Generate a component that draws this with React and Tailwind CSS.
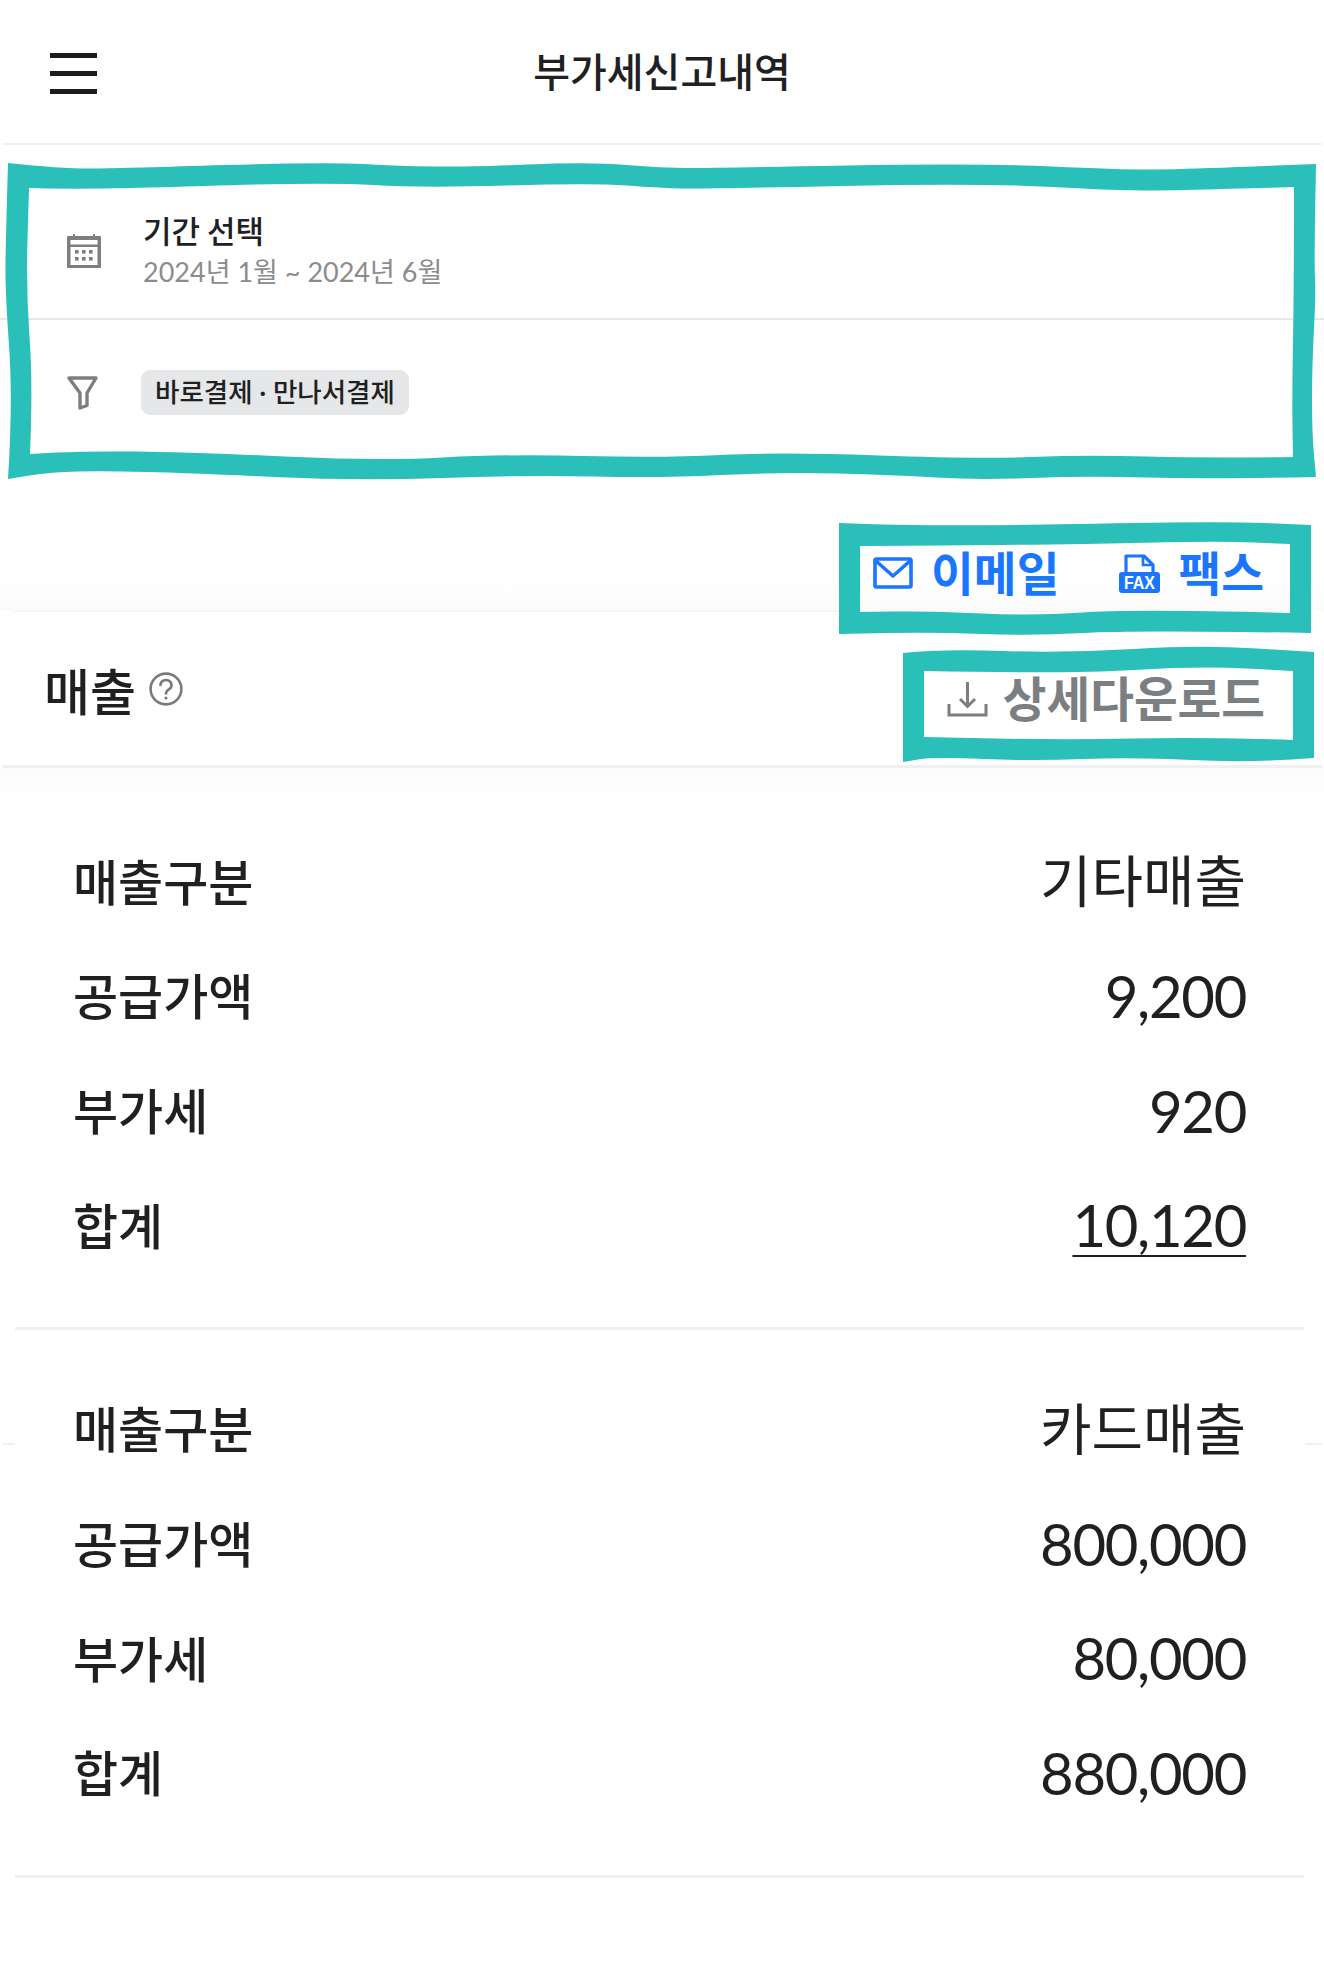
const rows = [
  [
    ['매출구분', '기타매출'],
    ['공급가액', '9,200'],
    ['부가세', '920'],
    ['합계', '10,120', true],
  ],
  [
    ['매출구분', '카드매출'],
    ['공급가액', '800,000'],
    ['부가세', '80,000'],
    ['합계', '880,000'],
  ],
];

// corners stay sharp, the points between them get smoothed
function wavy(edges) {
  let d = '';
  edges.forEach((pts, e) => {
    d += `${e === 0 ? 'M' : 'L'}${pts[0][0]} ${pts[0][1]} `;
    for (let i = 1; i < pts.length - 1; i++) {
      const mx = (pts[i][0] + pts[i + 1][0]) / 2;
      const my = (pts[i][1] + pts[i + 1][1]) / 2;
      d += `Q${pts[i][0]} ${pts[i][1]} ${mx} ${my} `;
    }
    const last = pts[pts.length - 1];
    d += `L${last[0]} ${last[1]} `;
  });
  return d + 'Z ';
}

const box1 =
  wavy([
    [[8, 163], [63, 169], [127, 168], [325, 162], [401, 166], [464, 167], [591, 162], [662, 168], [717, 168], [978, 163], [1126, 170], [1189, 169], [1316, 164]],
    [[1316, 164], [1314, 267], [1316, 290], [1312, 367], [1312, 433], [1316, 477]],
    [[1316, 477], [1210, 479], [1084, 476], [978, 480], [894, 475], [780, 472], [662, 478], [527, 475], [359, 481], [190, 473], [105, 471], [51, 472], [8, 479]],
    [[8, 479], [13, 400], [5, 290], [6, 233], [8, 163]],
  ]) +
  wavy([
    [[29, 188], [84, 190], [325, 182], [422, 188], [591, 183], [662, 188], [704, 189], [978, 183], [1126, 191], [1189, 190], [1294, 187]],
    [[1294, 187], [1294, 283], [1292, 400], [1293, 457]],
    [[1293, 457], [1210, 458], [1084, 455], [978, 459], [780, 452], [662, 458], [506, 454], [380, 461], [190, 452], [84, 451], [30, 454]],
    [[30, 454], [33, 383], [26, 290], [29, 188]],
  ]);

const box2 =
  wavy([
    [[839, 523], [933, 527], [1217, 521], [1311, 525]],
    [[1311, 525], [1311, 633]],
    [[1311, 633], [1133, 630], [1033, 636], [933, 632], [839, 634]],
    [[839, 634], [839, 523]],
  ]) +
  wavy([
    [[860, 546], [1050, 545], [1217, 541], [1290, 544]],
    [[1290, 544], [1290, 613]],
    [[1290, 613], [1133, 609], [1033, 616], [933, 611], [860, 612]],
    [[860, 612], [860, 546]],
  ]);

const box3 =
  wavy([
    [[903, 653], [940, 649], [1067, 653], [1200, 645], [1314, 652]],
    [[1314, 652], [1314, 758]],
    [[1314, 758], [1250, 763], [1133, 757], [1033, 761], [933, 757], [903, 762]],
    [[903, 762], [903, 653]],
  ]) +
  wavy([
    [[924, 671], [1067, 674], [1200, 666], [1293, 671]],
    [[1293, 671], [1293, 740]],
    [[1293, 740], [1200, 737], [1067, 740], [924, 737]],
    [[924, 737], [924, 671]],
  ]);

function CalendarIcon() {
  return (
    <svg width="34" height="36" viewBox="0 0 34 36" className="shrink-0" fill="#7c7f82">
      <path fillRule="evenodd" d="M1 3h5V1h2v2h18V1h2v2h5a1 1 0 0 1 1 1v30a1 1 0 0 1-1 1H1a1 1 0 0 1-1-1V4a1 1 0 0 1 1-1zm2.5 4v4.5h27V7zm0 7v18h27V14z" />
      {[8, 15, 22].map((x) => (
        <g key={x}>
          <rect x={x} y="17" width="3.6" height="3.6" />
          <rect x={x} y="24" width="3.6" height="3.6" />
        </g>
      ))}
    </svg>
  );
}

function FilterIcon() {
  return (
    <svg width="32" height="34" viewBox="0 0 32 34" className="shrink-0" fill="none" stroke="#7c7f82" strokeWidth="3.4" strokeLinejoin="round">
      <path d="M2 2h27L20 17v12.5L13 32V17z" />
    </svg>
  );
}

function MailIcon() {
  return (
    <svg width="40" height="32" viewBox="0 0 40 32" fill="none" stroke="#1a76ff" strokeWidth="3.6" strokeLinejoin="round">
      <rect x="2" y="2" width="36" height="28" rx="1.5" />
      <path d="M3 4l17 15L37 4" />
    </svg>
  );
}

function FaxIcon() {
  return (
    <svg width="41" height="40" viewBox="0 0 41 40">
      <path d="M7 21V3h18l9 9v9" fill="none" stroke="#1a76ff" strokeWidth="3.2" strokeLinejoin="round" />
      <path d="M24 3v9h10" fill="none" stroke="#1a76ff" strokeWidth="2.6" />
      <rect x="0" y="19" width="41" height="21" rx="3" fill="#1a76ff" />
      <text x="20.5" y="36" textAnchor="middle" fontSize="18" fontWeight="700" fill="#fff" fontFamily="Liberation Sans, sans-serif" textLength="31" lengthAdjust="spacingAndGlyphs">FAX</text>
    </svg>
  );
}

function DownloadIcon() {
  return (
    <svg width="41" height="36" viewBox="0 0 41 36" className="mt-[4px]" fill="none" stroke="#7b7f82" strokeWidth="3">
      <path d="M2 23v11h37V23" />
      <path d="M20.5 1v24M13 18l7.5 7.5L28 18" />
    </svg>
  );
}

function HelpIcon() {
  return (
    <svg width="34" height="34" viewBox="0 0 34 34" fill="none" stroke="#7a7a7a" strokeWidth="2.6" strokeLinecap="round">
      <circle cx="17" cy="17" r="15.4" />
      <path d="M11.5 13a5.5 5 0 1 1 8.4 4.3c-2 1.2-2.9 2-2.9 4.2" />
      <circle cx="17" cy="26" r="1.6" fill="#7a7a7a" stroke="none" />
    </svg>
  );
}

export default function App() {
  return (
    <div className="relative w-[1324px] h-[1980px] overflow-hidden bg-white text-[#1f2022] font-['Lato','Noto_Sans_CJK_KR',sans-serif]">
      <header className="relative mx-[2px] h-[145px] pb-[3px] flex items-center justify-center border-b-2 border-[#f1f1f1]">
        <button className="absolute left-[48px] top-[53px] w-[47px] flex flex-col gap-[13px]">
          <span className="block h-[5px] bg-[#1c1c1c]" />
          <span className="block h-[5px] bg-[#1c1c1c]" />
          <span className="block h-[5px] bg-[#1c1c1c]" />
        </button>
        <h1 className="text-[40px] leading-none font-medium font-['Noto_Sans_CJK_KR',sans-serif]">부가세신고내역</h1>
      </header>

      <div className="h-[175px] pt-[38px] pl-[67px] flex items-center gap-[42px] border-b-2 border-[#e8e8e8]">
        <CalendarIcon />
        <div className="flex flex-col gap-[2px]">
          <span className="text-[31px] leading-[40px] font-medium font-['Noto_Sans_CJK_KR',sans-serif]">기간 선택</span>
          <span className="text-[27px] leading-[40px] text-[#8c8c8c]">2024년 1월 ~ 2024년 6월</span>
        </div>
      </div>

      <div className="h-[145px] pl-[67px] flex items-center gap-[42px]">
        <FilterIcon />
        <span className="h-[45px] px-[14px] flex items-center rounded-[9px] bg-[#e6e7e9] text-[26.5px] font-medium">바로결제 · 만나서결제</span>
      </div>

      <div className="h-[146px] pb-[15px] pr-[60px] flex items-end justify-end bg-gradient-to-b from-white from-80% to-[#fafafa] font-['Noto_Sans_CJK_KR',sans-serif]">
        <div className="flex items-center gap-[18px]">
          <span className="mt-[3px]"><MailIcon /></span>
          <span className="text-[46.5px] leading-[50px] font-bold text-[#1a76ff]">이메일</span>
        </div>
        <div className="ml-[60px] flex items-center gap-[18px]">
          <span className="mt-[3px]"><FaxIcon /></span>
          <span className="text-[46.5px] leading-[50px] font-bold text-[#1a76ff]">팩스</span>
        </div>
      </div>

      <div className="mx-[2px] h-[157px] pl-[42px] pr-[57px] flex items-center justify-between rounded-t-2xl bg-white border-t border-b-[3px] border-t-[#f3f3f3] border-b-[#f0f0f0]">
        <div className="flex items-center gap-[13px]">
          <span className="text-[50px] leading-none font-medium font-['Noto_Sans_CJK_KR',sans-serif]">매출</span>
          <HelpIcon />
        </div>
        <div className="mt-[16px] flex items-center gap-[15px]">
          <DownloadIcon />
          <span className="text-[47.5px] leading-none font-bold text-[#7b7f82] font-['Noto_Sans_CJK_KR',sans-serif]">상세다운로드</span>
        </div>
      </div>

      <div className="h-[30px] -mb-[30px] bg-gradient-to-b from-[#fbfbfb] to-white" />

      <div className="relative">
        <span className="absolute left-[2px] top-[675px] w-[13px] h-0.5 bg-[#f1f1f1]" />
        <span className="absolute right-[2px] top-[675px] w-[17px] h-0.5 bg-[#f1f1f1]" />
        {rows.map((group, g) => (
          <div key={g} className={`ml-[15px] mr-[20px] pl-[58px] pr-[58px] ${g === 0 ? 'pt-[54px]' : 'pt-[40px]'} pb-[46px] border-b-[3px] border-[#f0f0f0]`}>
            {group.map(([label, value, underline]) => (
              <div key={label} className="h-[114.7px] flex items-center justify-between">
                <span className="text-[49px] font-medium font-['Noto_Sans_CJK_KR',sans-serif]">{label}</span>
                <span className={`pt-[3px] ${/^\d/.test(value) ? 'text-[58px] tracking-[-1.3px]' : 'text-[56px]'} ${underline ? 'underline underline-offset-8 decoration-2' : ''}`}>{value}</span>
              </div>
            ))}
          </div>
        ))}
      </div>

      {/* hand drawn marks on top of the capture */}
      <svg className="absolute left-0 top-0 pointer-events-none" width="1324" height="1980" viewBox="0 0 1324 1980" fill="#2abfb9" fillRule="evenodd">
        <path d={box1} />
        <path d={box2} />
        <path d={box3} />
      </svg>
    </div>
  );
}
